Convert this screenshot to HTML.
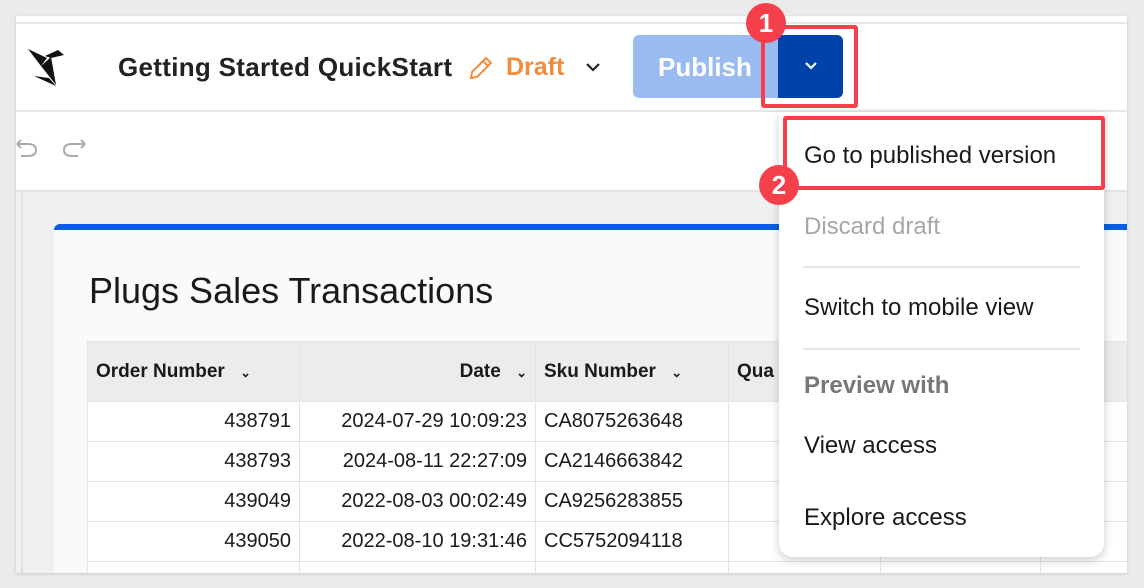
<!DOCTYPE html>
<html><head><meta charset="utf-8"><style>
*{margin:0;padding:0;box-sizing:border-box}
body{width:1144px;height:588px;background:#ebebeb;font-family:"Liberation Sans",sans-serif;position:relative;overflow:hidden;color:#1a1a1a}
.abs{position:absolute}
.panel{left:16px;top:16px;width:1111px;height:557px;background:#fff;box-shadow:0 1px 3px rgba(0,0,0,.15);overflow:hidden}
.t{white-space:nowrap}
table{border-collapse:collapse;font-size:20px;table-layout:fixed;width:1100px}
td,th{border:1px solid #e4e4e4;height:40px;padding:0 8px;white-space:nowrap;overflow:hidden}
th{background:#ececec;height:60px;font-weight:bold;font-size:19px}
td{background:#fff;text-align:right}
.menu .it{position:absolute;left:25px;font-size:24px;white-space:nowrap}
</style></head><body>
<div class="abs panel">
  <div class="abs" style="left:0;top:6px;width:1111px;height:2px;background:#e6e6e6"></div>
  <div class="abs" style="left:0;top:94px;width:1111px;height:2px;background:#e6e6e6"></div>
  <div class="abs" style="left:0;top:174px;width:1111px;height:2px;background:#e4e4e4"></div>
  <!-- logo -->
  <svg class="abs" style="left:11px;top:31px" width="40" height="42" viewBox="0 0 40 42">
    <polygon points="1,2 20,11 14,19" fill="#111"/>
    <polygon points="14,19 24,10 29,38" fill="#111"/>
    <polygon points="7,29 22,31 29,39" fill="#111"/>
    <polygon points="18,9 31,3 37,8 24,11" fill="#111"/>
  </svg>
  <div class="abs t" style="left:102px;top:36px;font-size:26px;font-weight:bold;color:#222;letter-spacing:0.3px">Getting Started QuickStart</div>
  <svg class="abs" style="left:451px;top:38px" width="28" height="28" viewBox="0 0 28 28"><path d="M4 24 L5 18 L19 4 L24 9 L10 23 Z M16 7 L21 12" fill="none" stroke="#f08c3c" stroke-width="2"/></svg>
  <div class="abs t" style="left:490px;top:37px;font-size:25px;font-weight:bold;color:#f08c3c">Draft</div>
  <svg class="abs" style="left:568px;top:44px" width="18" height="14" viewBox="0 0 18 14"><path d="M3 4 L9 10 L15 4" fill="none" stroke="#222" stroke-width="2.2"/></svg>
  <div class="abs" style="left:617px;top:19px;width:145px;height:63px;background:#99bbf0;border-radius:6px 0 0 6px"></div>
  <div class="abs t" style="left:642px;top:36px;font-size:26px;font-weight:bold;color:#fff">Publish</div>
  <div class="abs" style="left:762px;top:19px;width:65px;height:63px;background:#0042a9;border-radius:0 6px 6px 0"></div>
  <svg class="abs" style="left:786px;top:43px" width="18" height="14" viewBox="0 0 18 14"><path d="M4 4 L9 9 L14 4" fill="none" stroke="#fff" stroke-width="2.2"/></svg>
  <!-- undo redo -->
  <svg class="abs" style="left:0;top:123px" width="80" height="26" viewBox="0 0 80 26"><path d="M1 5 L12 5 Q20 5 20 11 Q20 17 12 17 L5 17 M1 5 L5 1 M1 5 L5 9" fill="none" stroke="#aaa" stroke-width="2"/><path d="M69 5 L56 5 Q48 5 48 11 Q48 17 56 17 L62 17 M69 5 L65 1 M69 5 L65 9" fill="none" stroke="#aaa" stroke-width="2"/></svg>
  <!-- workspace -->
  <div class="abs" style="left:0;top:176px;width:1111px;height:381px;background:#f0f0f0"></div>
  <div class="abs" style="left:5px;top:176px;width:2px;height:381px;background:#e0e0e0"></div>
  <div class="abs" style="left:38px;top:208px;width:1073px;height:349px;background:#fafafa;border-top:6px solid #0a5ce0;border-radius:6px 0 0 0"></div>
  <div class="abs t" style="left:73px;top:254px;font-size:36px;color:#1a1a1a">Plugs Sales Transactions</div>
  <table class="abs" style="left:71px;top:325px">
    <colgroup><col style="width:212px"><col style="width:236px"><col style="width:193px"><col style="width:152px"><col style="width:160px"><col style="width:160px"><col style="width:60px"></colgroup>
    <tr><th style="text-align:left">Order Number <span style="font-size:13px;margin-left:10px">&#8964;</span></th><th style="text-align:right">Date <span style="font-size:13px;margin-left:10px">&#8964;</span></th><th style="text-align:left">Sku Number <span style="font-size:13px;margin-left:10px">&#8964;</span></th><th style="text-align:left">Qua</th><th></th><th></th><th style="text-align:left">P</th></tr>
    <tr><td>438791</td><td>2024-07-29 10:09:23</td><td style="text-align:left">CA8075263648</td><td></td><td></td><td></td><td style="text-align:left">P</td></tr>
    <tr><td>438793</td><td>2024-08-11 22:27:09</td><td style="text-align:left">CA2146663842</td><td></td><td></td><td></td><td style="text-align:left">P</td></tr>
    <tr><td>439049</td><td>2022-08-03 00:02:49</td><td style="text-align:left">CA9256283855</td><td></td><td></td><td></td><td style="text-align:left">P</td></tr>
    <tr><td>439050</td><td>2022-08-10 19:31:46</td><td style="text-align:left">CC5752094118</td><td></td><td></td><td></td><td style="text-align:left">P</td></tr>
    <tr><td>439104</td><td>2022-08-10 00:50:00</td><td style="text-align:left">CA5057040050</td><td>3</td><td>000.70</td><td>000.11</td><td style="text-align:left">P</td></tr>
  </table>
</div>
<!-- menu -->
<div class="abs menu" style="left:779px;top:112px;width:325px;height:445px;background:#fff;border-radius:0 0 14px 14px;box-shadow:0 3px 10px rgba(0,0,0,.2)">
  <div class="it" style="top:30px;color:#1a1a1a">Go to published version</div>
  <div class="it" style="top:101px;color:#a6a6a6">Discard draft</div>
  <div class="abs" style="left:24px;top:154px;width:277px;height:2px;background:#e4e4e4"></div>
  <div class="it" style="top:182px">Switch to mobile view</div>
  <div class="abs" style="left:24px;top:236px;width:277px;height:2px;background:#e4e4e4"></div>
  <div class="it" style="top:260px;color:#777;font-weight:bold">Preview with</div>
  <div class="it" style="top:320px">View access</div>
  <div class="it" style="top:392px">Explore access</div>
</div>
<!-- annotations -->
<div class="abs" style="left:761px;top:25px;width:97px;height:83px;border:4px solid #f5404c;border-radius:3px"></div>
<div class="abs" style="left:783px;top:116px;width:322px;height:74px;border:4px solid #f5404c;border-radius:3px"></div>
<div class="abs" style="left:746px;top:3px;width:40px;height:40px;border-radius:50%;background:#f5404c;color:#fff;font-weight:bold;font-size:26px;text-align:center;line-height:40px">1</div>
<div class="abs" style="left:759px;top:165px;width:40px;height:40px;border-radius:50%;background:#f5404c;color:#fff;font-weight:bold;font-size:26px;text-align:center;line-height:40px">2</div>
</body></html>
